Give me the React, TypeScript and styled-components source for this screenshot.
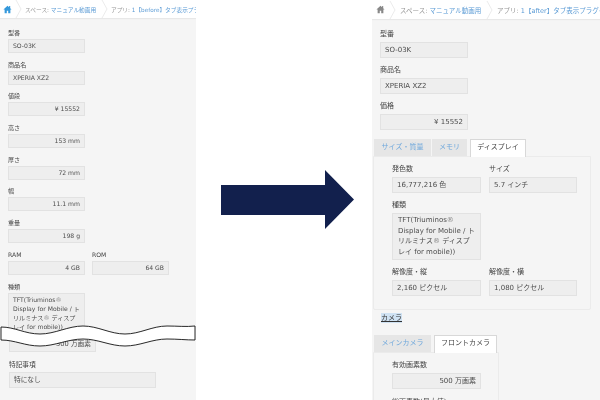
import styled, { createGlobalStyle } from 'styled-components';

const GlobalStyle = createGlobalStyle`
  html, body {
    margin: 0;
    padding: 0;
    background: #ffffff;
  }
  body {
    width: 600px;
    height: 400px;
    overflow: hidden;
    font-family: 'DejaVu Sans', 'Noto Sans CJK JP', sans-serif;
    color: #333333;
  }
`;

const Page = styled.div`
  display: flex;
  width: 600px;
  height: 400px;
  overflow: hidden;
`;

const Screen = styled.div<{ $width: number }>`
  flex: none;
  width: ${(p) => p.$width}px;
  height: 400px;
  background: #f5f5f5;
  overflow: hidden;
  filter: blur(0.35px);
`;

const Middle = styled.div`
  flex: none;
  width: 176px;
  height: 400px;
  padding: 170px 0 0 25px;
  box-sizing: border-box;
`;

const Breadcrumb = styled.div<{ $large?: boolean }>`
  display: flex;
  align-items: center;
  height: ${(p) => (p.$large ? 19 : 18)}px;
  background: #ffffff;
  box-shadow: 0 1px 1px rgba(0, 0, 0, 0.05);
  padding-left: ${(p) => (p.$large ? 4 : 3)}px;
  font-size: ${(p) => (p.$large ? 6.5 : 5.7)}px;
  color: #999999;
  white-space: nowrap;
  overflow: hidden;
`;

const Crumb = styled.span<{ $width: number; $pad: number }>`
  flex: none;
  box-sizing: border-box;
  width: ${(p) => p.$width}px;
  padding-left: ${(p) => p.$pad}px;
`;

const CrumbLink = styled.span`
  color: #5b9bd5;
`;

const HomeSvg = styled.svg`
  flex: none;
`;

const ChevronSvg = styled.svg<{ $before?: number }>`
  flex: none;
  margin-left: ${(p) => p.$before ?? 0}px;
`;

const Form = styled.div<{ $top: number; $left: number }>`
  padding: ${(p) => p.$top}px 0 0 ${(p) => p.$left}px;
`;

const Row = styled.div<{ $gap: number }>`
  display: flex;
  gap: ${(p) => p.$gap}px;
`;

const Field = styled.div<{ $width: number; $after?: number }>`
  width: ${(p) => p.$width}px;
  margin-bottom: ${(p) => p.$after ?? 0}px;
`;

const Label = styled.div<{ $height: number; $size: number }>`
  height: ${(p) => p.$height}px;
  line-height: ${(p) => p.$height}px;
  font-size: ${(p) => p.$size}px;
  color: #444444;
  white-space: nowrap;
`;

const Value = styled.div<{ $height: number; $size: number; $right?: boolean }>`
  box-sizing: border-box;
  height: ${(p) => p.$height}px;
  line-height: ${(p) => p.$height - 2}px;
  padding: 0 4px;
  font-size: ${(p) => p.$size}px;
  text-align: ${(p) => (p.$right ? 'right' : 'left')};
  background: #eeeeee;
  border: 1px solid #e2e2e2;
  color: #4d4d4d;
  white-space: nowrap;
`;

const MultiValue = styled.div<{ $height: number; $size: number; $line: number; $pad: number }>`
  box-sizing: border-box;
  height: ${(p) => p.$height}px;
  padding: 1px ${(p) => p.$pad}px;
  font-size: ${(p) => p.$size}px;
  line-height: ${(p) => p.$line}px;
  background: #eeeeee;
  border: 1px solid #e2e2e2;
  color: #4d4d4d;
  overflow: hidden;
`;

const Reg = styled.span`
  color: #888888;
`;

const Cut = styled.div`
  position: relative;
`;

const Wave = styled.svg`
  position: absolute;
  left: -8px;
  top: 32px;
  z-index: 1;
`;

const LowerValue = styled.div`
  margin-left: 1px;
`;

const TabBar = styled.div<{ $top: number }>`
  display: flex;
  gap: 1px;
  height: 17px;
  margin: ${(p) => p.$top}px 0 0 2px;
`;

const Tab = styled.div<{ $width: number; $active?: boolean }>`
  box-sizing: border-box;
  width: ${(p) => p.$width}px;
  height: ${(p) => (p.$active ? 18 : 17)}px;
  margin-left: ${(p) => (p.$active ? 2 : 0)}px;
  line-height: 15px;
  text-align: center;
  font-size: 7px;
  white-space: nowrap;
  color: ${(p) => (p.$active ? '#444444' : '#6fa8dc')};
  background: ${(p) => (p.$active ? '#ffffff' : '#e6e6e6')};
  border: 1px solid ${(p) => (p.$active ? '#d8d8d8' : '#e6e6e6')};
  border-bottom: none;
  position: relative;
  z-index: 1;
`;

const TabPanel = styled.div<{ $width: number; $height: number }>`
  box-sizing: border-box;
  width: ${(p) => p.$width}px;
  height: ${(p) => p.$height}px;
  margin-left: 1px;
  padding: 5px 0 0 18px;
  border: 1px solid #ebebeb;
  border-radius: 0 0 2px 2px;
`;

const SectionTitle = styled.div`
  width: fit-content;
  margin: 3px 0 12px 9px;
  height: 10px;
  line-height: 10px;
  font-size: 7px;
  color: #333333;
  text-decoration: underline;
  background: #cfe2f3;
`;

const Arrow = () => (
  <svg width="134" height="60" viewBox="0 0 134 60">
    <path d="M0 15H104V0L133 29.5L104 59V45H0Z" fill="#12204d" />
  </svg>
);

const HomeIcon = ({ color }: { color: string }) => (
  <HomeSvg width="9" height="9" viewBox="0 0 10 10">
    <path d="M5 .8 .5 5h1.3v4.2h2.4V6.4h1.6v2.8h2.4V5h1.3L8 3.6V1.2H6.8v1.3Z" fill={color} />
  </HomeSvg>
);

const Chevron = ({ before }: { before?: number }) => (
  <ChevronSvg $before={before} width="7" height="18" viewBox="0 0 7 18">
    <path d="M1 0 6 9 1 18" fill="none" stroke="#e6e6e6" strokeWidth="0.8" />
  </ChevronSvg>
);

const DisplayKind = () => (
  <>
    TFT(Triuminos<Reg>®</Reg> Display for Mobile / トリルミナス<Reg>®</Reg> ディスプレイ for mobile))
  </>
);

const BeforeScreen = () => {
  const field = { $height: 13, $size: 6.1 };
  const value = { $height: 14, $size: 6.1 };
  const simple = [
    ['高さ', '153 mm'],
    ['厚さ', '72 mm'],
    ['幅', '11.1 mm'],
    ['重量', '198 g'],
  ];
  return (
    <Screen $width={196}>
      <Breadcrumb>
        <HomeIcon color="#3498db" />
        <Chevron before={3} />
        <Crumb $width={79} $pad={3}>
          スペース: <CrumbLink>マニュアル動画用</CrumbLink>
        </Crumb>
        <Chevron />
        <Crumb $width={90} $pad={3}>
          アプリ: <CrumbLink>1【before】タブ表示プラグイン</CrumbLink>
        </Crumb>
      </Breadcrumb>
      <Form $top={8} $left={8}>
        <Field $width={77} $after={4.7}>
          <Label {...field}>型番</Label>
          <Value {...value}>SO-03K</Value>
        </Field>
        <Field $width={77} $after={4.7}>
          <Label {...field}>商品名</Label>
          <Value {...value}>XPERIA XZ2</Value>
        </Field>
        <Field $width={77} $after={4.7}>
          <Label {...field}>値段</Label>
          <Value {...value} $right>¥ 15552</Value>
        </Field>
        {simple.map(([label, text]) => (
          <Field $width={77} $after={4.7} key={label}>
            <Label {...field}>{label}</Label>
            <Value {...value} $right>{text}</Value>
          </Field>
        ))}
        <Row $gap={7}>
          <Field $width={77} $after={4.7}>
            <Label {...field}>RAM</Label>
            <Value {...value} $right>4 GB</Value>
          </Field>
          <Field $width={77} $after={4.7}>
            <Label {...field}>ROM</Label>
            <Value {...value} $right>64 GB</Value>
          </Field>
        </Row>
        <Label {...field}>種類</Label>
        <Cut>
          <Field $width={77}>
            <MultiValue $height={43} $size={6.1} $line={9.2} $pad={4}>
              <DisplayKind />
            </MultiValue>
          </Field>
          <Wave width="196" height="22" viewBox="0 0 196 22">
            <path
              d="M1 2C15 2 25 9 40 9S68 1 83 1S110 9 125 9S152 1 167 1C178 1 186 2 195 1V15C186 15 178 14 167 14C152 14 140 21 125 21S98 14 83 14S55 21 40 21S15 15 1 15Z"
              fill="#ffffff"
              stroke="#111111"
              strokeWidth="0.9"
            />
          </Wave>
          <LowerValue>
            <Field $width={87} $after={6}>
              <Value $height={16} $size={6.7} $right>500 万画素</Value>
            </Field>
          </LowerValue>
        </Cut>
        <LowerValue>
          <Field $width={147}>
            <Label $height={14} $size={6.7}>特記事項</Label>
            <Value $height={16} $size={6.7}>特になし</Value>
          </Field>
        </LowerValue>
      </Form>
    </Screen>
  );
};

const AfterScreen = () => {
  const label = { $height: 15, $size: 7 };
  const value = { $height: 16, $size: 7 };
  return (
    <Screen $width={228}>
      <Breadcrumb $large>
        <HomeIcon color="#888888" />
        <Chevron before={4} />
        <Crumb $width={90} $pad={4}>
          スペース: <CrumbLink>マニュアル動画用</CrumbLink>
        </Crumb>
        <Chevron />
        <Crumb $width={110} $pad={4}>
          アプリ: <CrumbLink>1【after】タブ表示プラグイン</CrumbLink>
        </Crumb>
      </Breadcrumb>
      <Form $top={8} $left={8}>
        <Field $width={88} $after={5}>
          <Label {...label}>型番</Label>
          <Value {...value}>SO-03K</Value>
        </Field>
        <Field $width={88} $after={5}>
          <Label {...label}>商品名</Label>
          <Value {...value}>XPERIA XZ2</Value>
        </Field>
        <Field $width={88}>
          <Label {...label}>価格</Label>
          <Value {...value} $right>¥ 15552</Value>
        </Field>
      </Form>
      <TabBar $top={9}>
        <Tab $width={57}>サイズ・質量</Tab>
        <Tab $width={35}>メモリ</Tab>
        <Tab $width={56} $active>ディスプレイ</Tab>
      </TabBar>
      <TabPanel $width={218} $height={154}>
        <Row $gap={8}>
          <Field $width={89} $after={5}>
            <Label {...label}>発色数</Label>
            <Value {...value}>16,777,216 色</Value>
          </Field>
          <Field $width={88} $after={5}>
            <Label {...label}>サイズ</Label>
            <Value {...value}>5.7 インチ</Value>
          </Field>
        </Row>
        <Field $width={89} $after={5}>
          <Label {...label}>種類</Label>
          <MultiValue $height={47} $size={7} $line={10.5} $pad={5}>
            <DisplayKind />
          </MultiValue>
        </Field>
        <Row $gap={8}>
          <Field $width={89}>
            <Label {...label}>解像度・縦</Label>
            <Value {...value}>2,160 ピクセル</Value>
          </Field>
          <Field $width={88}>
            <Label {...label}>解像度・横</Label>
            <Value {...value}>1,080 ピクセル</Value>
          </Field>
        </Row>
      </TabPanel>
      <SectionTitle>カメラ</SectionTitle>
      <TabBar $top={0}>
        <Tab $width={57}>メインカメラ</Tab>
        <Tab $width={63} $active>フロントカメラ</Tab>
      </TabBar>
      <TabPanel $width={126} $height={60}>
        <Field $width={89} $after={6}>
          <Label {...label}>有効画素数</Label>
          <Value {...value} $right>500 万画素</Value>
        </Field>
        <Label {...label}>総画素数(最大値)</Label>
      </TabPanel>
    </Screen>
  );
};

export default function App() {
  return (
    <Page>
      <GlobalStyle />
      <BeforeScreen />
      <Middle>
        <Arrow />
      </Middle>
      <AfterScreen />
    </Page>
  );
}
